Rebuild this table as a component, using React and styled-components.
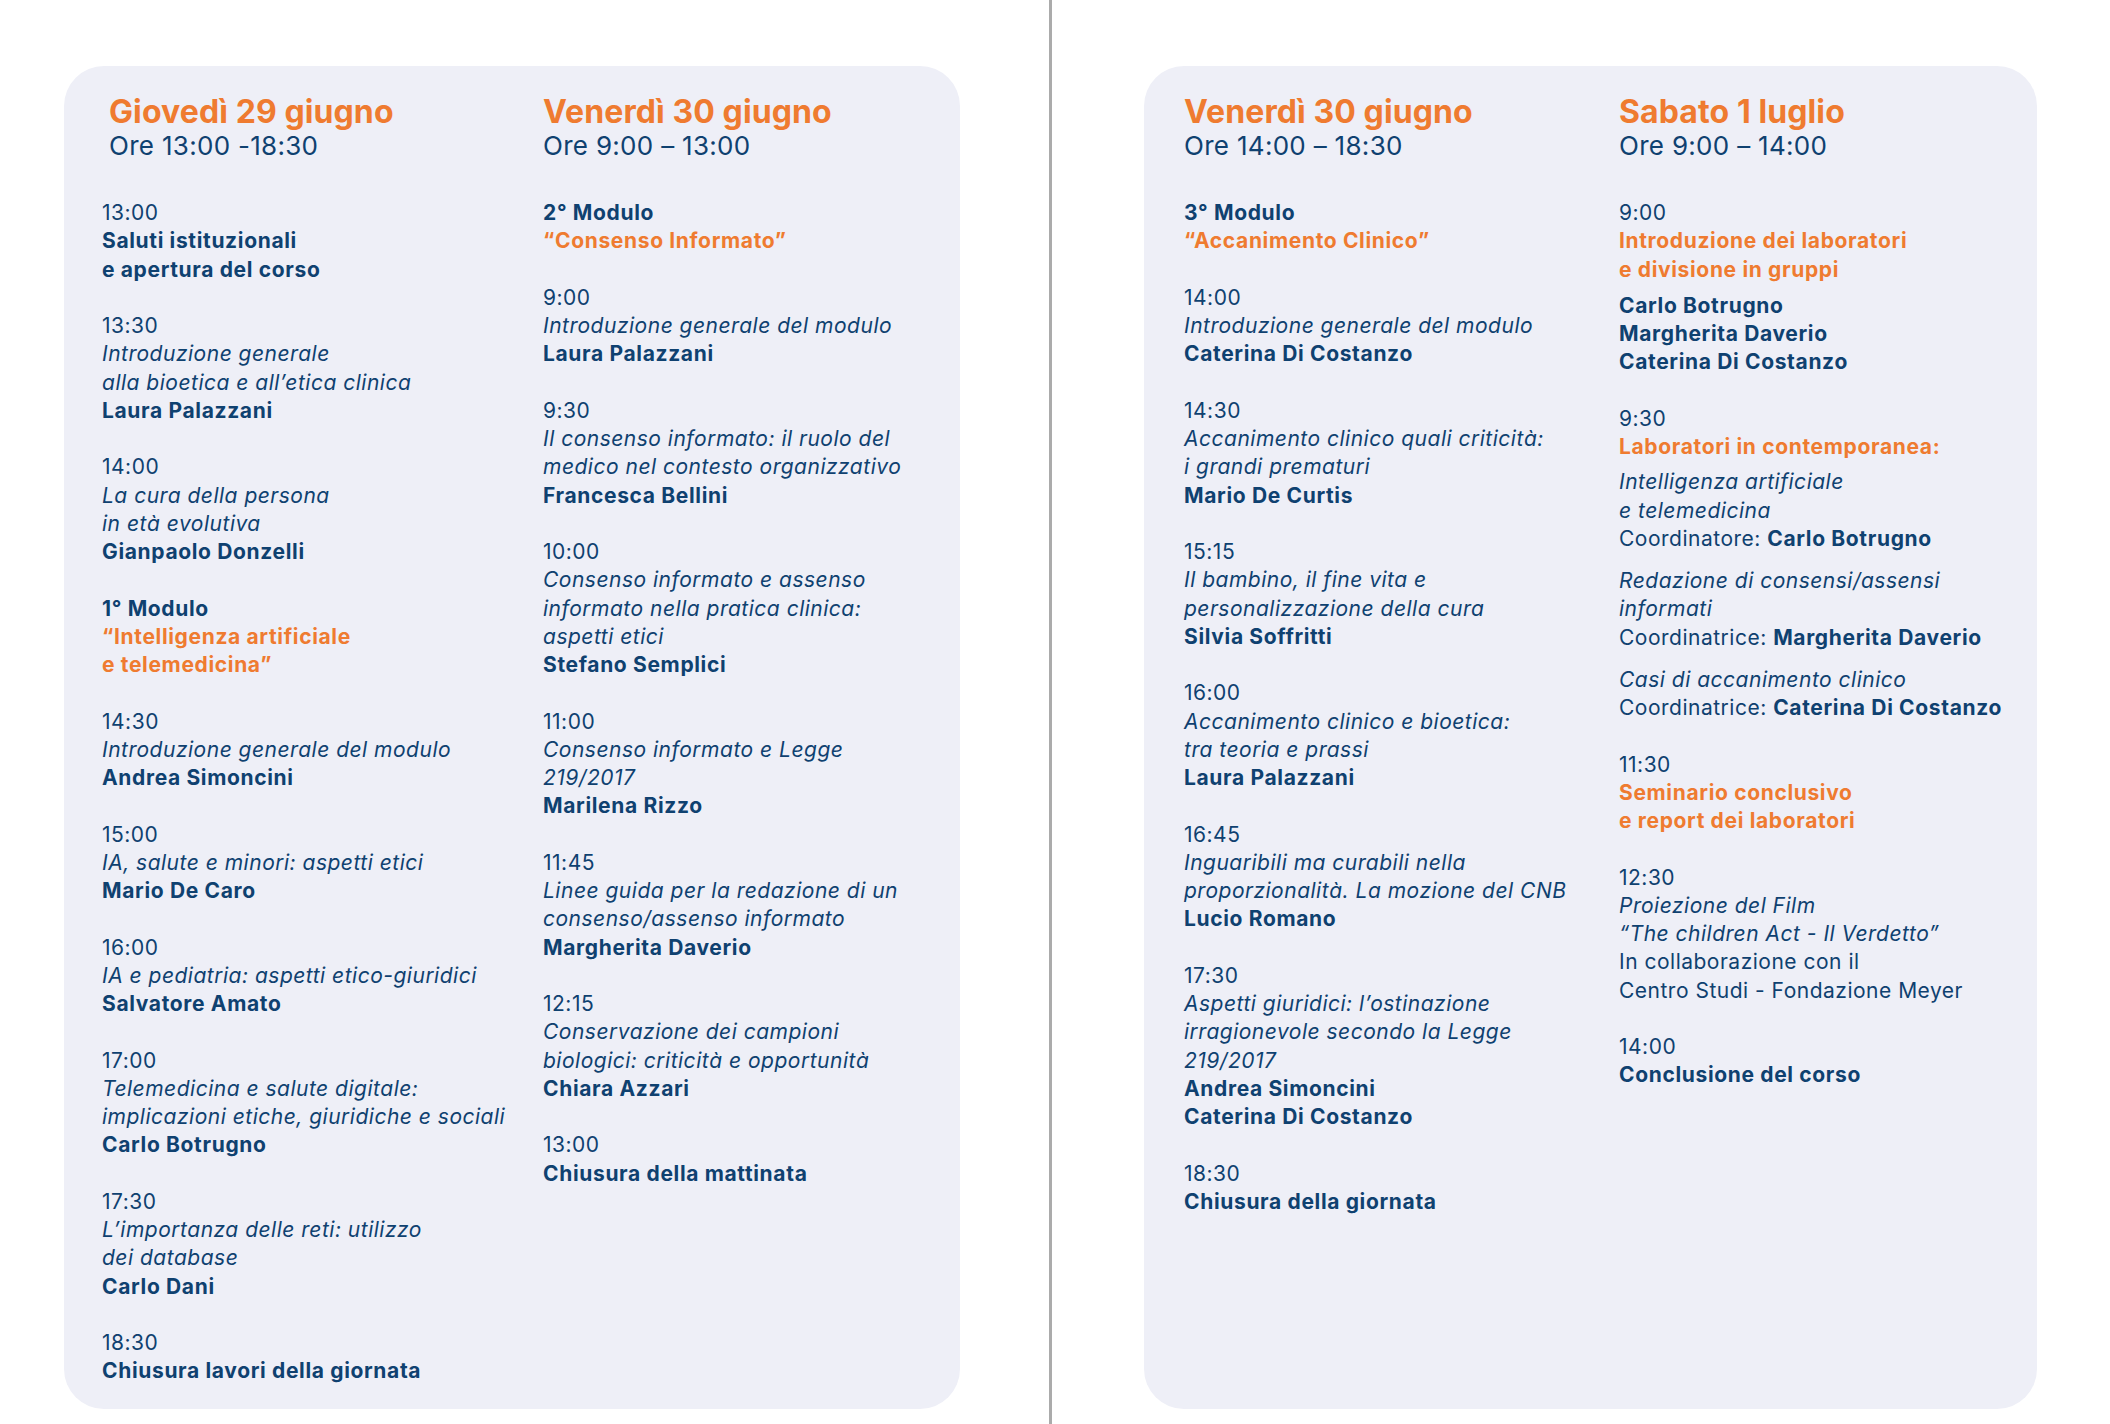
import React from 'react';
import styled, { createGlobalStyle } from 'styled-components';

const GlobalStyle = createGlobalStyle`
  html, body {
    margin: 0;
    padding: 0;
    background: #ffffff;
  }
  body {
    font-family: Inter, 'Noto Sans', sans-serif;
    color: #0f4170;
  }
`;

const Page = styled.div`
  display: flex;
  align-items: flex-start;
  width: 2110px;
  height: 1424px;
  overflow: hidden;
`;

const Card = styled.section`
  display: grid;
  grid-template-columns: ${(props) => props.$col}px 1fr;
  box-sizing: border-box;
  width: ${(props) => props.$width}px;
  height: 1343px;
  margin-top: 66px;
  margin-left: ${(props) => props.$left}px;
  padding: 29px 0 0 ${(props) => props.$pad}px;
  border-radius: 40px;
  background: #eeeff7;
`;

const Divider = styled.div`
  flex: none;
  width: 3px;
  height: 1424px;
  margin-left: 89px;
  background: #ababab;
`;

const Column = styled.div`
  display: flex;
  flex-direction: column;
`;

const DayTitle = styled.h2`
  margin: 0;
  padding-left: ${(props) => props.$indent || 0}px;
  font-size: 32px;
  line-height: 34px;
  font-weight: 700;
  letter-spacing: 0.1px;
  color: #ef7b30;
  white-space: nowrap;
`;

const Hours = styled.div`
  padding-left: ${(props) => props.$indent || 0}px;
  margin-bottom: 36px;
  font-size: 26px;
  line-height: 34px;
  font-weight: 400;
  letter-spacing: 0.3px;
  white-space: nowrap;
`;

const Slot = styled.div`
  & + & {
    margin-top: 28.25px;
  }
`;

const Block = styled.div`
  margin-top: ${(props) => props.$gap || 0}px;
`;

const kinds = {
  time: 'font-weight: 400;',
  bold: 'font-weight: 700; letter-spacing: 0.65px;',
  italic: 'font-weight: 400; font-style: italic;',
  accent: 'font-weight: 700; letter-spacing: 0.65px; color: #ef7b30;',
  plain: 'font-weight: 400;',
};

const Line = styled.div`
  font-size: 21px;
  line-height: 28.25px;
  letter-spacing: 0.5px;
  white-space: nowrap;
  ${(props) => kinds[props.$kind]}
`;

const Name = styled.b`
  font-weight: 700;
  letter-spacing: 0.65px;
`;

// each slot: list of blocks; a block is a list of lines or { gap, lines }
const days = [
  {
    card: { width: 896, left: 64, pad: 38, col: 441 },
    columns: [
      {
        title: 'Giovedì 29 giugno',
        hours: 'Ore 13:00 -18:30',
        indent: 7,
        slots: [
          [[['time', '13:00'], ['bold', 'Saluti istituzionali'], ['bold', 'e apertura del corso']]],
          [[['time', '13:30'], ['italic', 'Introduzione generale'], ['italic', 'alla bioetica e all’etica clinica'], ['bold', 'Laura Palazzani']]],
          [[['time', '14:00'], ['italic', 'La cura della persona'], ['italic', 'in età evolutiva'], ['bold', 'Gianpaolo Donzelli']]],
          [[['bold', '1° Modulo'], ['accent', '“Intelligenza artificiale'], ['accent', 'e telemedicina”']]],
          [[['time', '14:30'], ['italic', 'Introduzione generale del modulo'], ['bold', 'Andrea Simoncini']]],
          [[['time', '15:00'], ['italic', 'IA, salute e minori: aspetti etici'], ['bold', 'Mario De Caro']]],
          [[['time', '16:00'], ['italic', 'IA e pediatria: aspetti etico-giuridici'], ['bold', 'Salvatore Amato']]],
          [[['time', '17:00'], ['italic', 'Telemedicina e salute digitale:'], ['italic', 'implicazioni etiche, giuridiche e sociali'], ['bold', 'Carlo Botrugno']]],
          [[['time', '17:30'], ['italic', 'L’importanza delle reti: utilizzo'], ['italic', 'dei database'], ['bold', 'Carlo Dani']]],
          [[['time', '18:30'], ['bold', 'Chiusura lavori della giornata']]],
        ],
      },
      {
        title: 'Venerdì 30 giugno',
        hours: 'Ore 9:00 – 13:00',
        slots: [
          [[['bold', '2° Modulo'], ['accent', '“Consenso Informato”']]],
          [[['time', '9:00'], ['italic', 'Introduzione generale del modulo'], ['bold', 'Laura Palazzani']]],
          [[['time', '9:30'], ['italic', 'Il consenso informato: il ruolo del'], ['italic', 'medico nel contesto organizzativo'], ['bold', 'Francesca Bellini']]],
          [[['time', '10:00'], ['italic', 'Consenso informato e assenso'], ['italic', 'informato nella pratica clinica:'], ['italic', 'aspetti etici'], ['bold', 'Stefano Semplici']]],
          [[['time', '11:00'], ['italic', 'Consenso informato e Legge'], ['italic', '219/2017'], ['bold', 'Marilena Rizzo']]],
          [[['time', '11:45'], ['italic', 'Linee guida per la redazione di un'], ['italic', 'consenso/assenso informato'], ['bold', 'Margherita Daverio']]],
          [[['time', '12:15'], ['italic', 'Conservazione dei campioni'], ['italic', 'biologici: criticità e opportunità'], ['bold', 'Chiara Azzari']]],
          [[['time', '13:00'], ['bold', 'Chiusura della mattinata']]],
        ],
      },
    ],
  },
  {
    card: { width: 893, left: 92, pad: 40, col: 435 },
    columns: [
      {
        title: 'Venerdì 30 giugno',
        hours: 'Ore 14:00 – 18:30',
        slots: [
          [[['bold', '3° Modulo'], ['accent', '“Accanimento Clinico”']]],
          [[['time', '14:00'], ['italic', 'Introduzione generale del modulo'], ['bold', 'Caterina Di Costanzo']]],
          [[['time', '14:30'], ['italic', 'Accanimento clinico quali criticità:'], ['italic', 'i grandi prematuri'], ['bold', 'Mario De Curtis']]],
          [[['time', '15:15'], ['italic', 'Il bambino, il fine vita e'], ['italic', 'personalizzazione della cura'], ['bold', 'Silvia Soffritti']]],
          [[['time', '16:00'], ['italic', 'Accanimento clinico e bioetica:'], ['italic', 'tra teoria e prassi'], ['bold', 'Laura Palazzani']]],
          [[['time', '16:45'], ['italic', 'Inguaribili ma curabili nella'], ['italic', 'proporzionalità. La mozione del CNB'], ['bold', 'Lucio Romano']]],
          [[['time', '17:30'], ['italic', 'Aspetti giuridici: l’ostinazione'], ['italic', 'irragionevole secondo la Legge'], ['italic', '219/2017'], ['bold', 'Andrea Simoncini'], ['bold', 'Caterina Di Costanzo']]],
          [[['time', '18:30'], ['bold', 'Chiusura della giornata']]],
        ],
      },
      {
        title: 'Sabato 1 luglio',
        hours: 'Ore 9:00 – 14:00',
        slots: [
          [
            [['time', '9:00'], ['accent', 'Introduzione dei laboratori'], ['accent', 'e divisione in gruppi']],
            { gap: 8, lines: [['bold', 'Carlo Botrugno'], ['bold', 'Margherita Daverio'], ['bold', 'Caterina Di Costanzo']] },
          ],
          [
            [['time', '9:30'], ['accent', 'Laboratori in contemporanea:']],
            { gap: 7, lines: [['italic', 'Intelligenza artificiale'], ['italic', 'e telemedicina'], ['plain', 'Coordinatore: ', 'Carlo Botrugno']] },
            { gap: 14, lines: [['italic', 'Redazione di consensi/assensi'], ['italic', 'informati'], ['plain', 'Coordinatrice: ', 'Margherita Daverio']] },
            { gap: 14, lines: [['italic', 'Casi di accanimento clinico'], ['plain', 'Coordinatrice: ', 'Caterina Di Costanzo']] },
          ],
          [[['time', '11:30'], ['accent', 'Seminario conclusivo'], ['accent', 'e report dei laboratori']]],
          [[['time', '12:30'], ['italic', 'Proiezione del Film'], ['italic', '“The children Act - Il Verdetto”'], ['plain', 'In collaborazione con il'], ['plain', 'Centro Studi - Fondazione Meyer']]],
          [[['time', '14:00'], ['bold', 'Conclusione del corso']]],
        ],
      },
    ],
  },
];

const Lines = ({ lines }) =>
  lines.map(([kind, text, name], i) => (
    <Line key={i} $kind={kind}>
      {text}
      {name && <Name>{name}</Name>}
    </Line>
  ));

const Programme = ({ column }) => (
  <Column>
    <DayTitle $indent={column.indent}>{column.title}</DayTitle>
    <Hours $indent={column.indent}>{column.hours}</Hours>
    {column.slots.map((blocks, i) => (
      <Slot key={i}>
        {blocks.map((block, j) =>
          Array.isArray(block) ? (
            <Block key={j}>
              <Lines lines={block} />
            </Block>
          ) : (
            <Block key={j} $gap={block.gap}>
              <Lines lines={block.lines} />
            </Block>
          )
        )}
      </Slot>
    ))}
  </Column>
);

const App = () => (
  <>
    <GlobalStyle />
    <Page>
      {days.map((day, i) => (
        <React.Fragment key={i}>
          {i > 0 && <Divider />}
          <Card $width={day.card.width} $left={day.card.left} $pad={day.card.pad} $col={day.card.col}>
            {day.columns.map((column, j) => (
              <Programme key={j} column={column} />
            ))}
          </Card>
        </React.Fragment>
      ))}
    </Page>
  </>
);

export default App;
